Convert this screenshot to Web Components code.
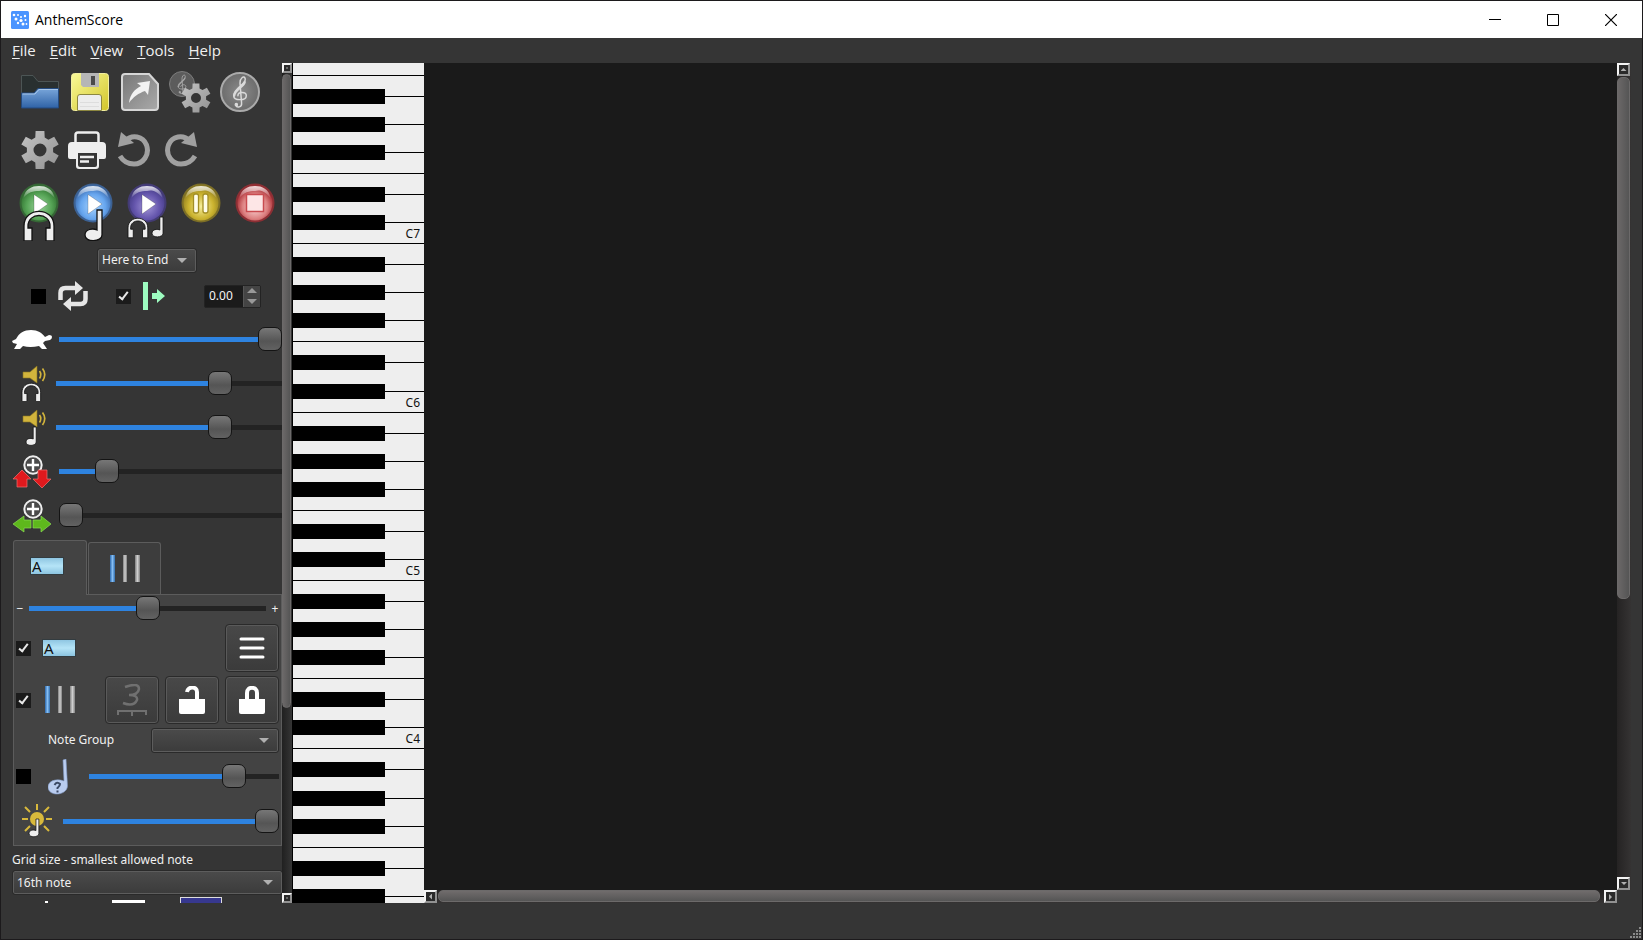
<!DOCTYPE html>
<html lang="en">
<head>
<meta charset="utf-8">
<title>AnthemScore</title>
<style>
  html, body { margin: 0; height: 100%; background: #1c1a1c; }
  body { font: 12px/16px "Noto Sans", "Open Sans", sans-serif; color: #f0f0f0; overflow: hidden; }
</style>
</head>
<body>
<as-window></as-window>
<script>
const define = (name, html, init) => {
  const template = document.createElement('template');
  template.innerHTML = html;
  customElements.define(name, class extends HTMLElement {
    constructor() {
      super();
      this.attachShadow({ mode: 'open' }).append(template.content.cloneNode(true));
    }
    connectedCallback() { if (init) init.call(this, this.shadowRoot); }
  });
};

/* ---------- icons ---------- */
const clef = (x, y, s, c) => `<g transform="translate(${x} ${y}) scale(${s})" fill="none" stroke="${c}" stroke-linecap="round"><path stroke-width="1.400" d="M-4 13C-3 16 2 15 1.500 11L0-8C0-13 4-16 5-12C6-7-6-3-6 4C-6 9 6 9 6 4C6 0-2 0-2 4"/><path stroke-width="2.200" d="M4.500-9C3-4-5-2-5.500 4"/><circle cx="-3.500" cy="12.500" r="1.200" fill="${c}"/></g>`;
const teeth = (cx, cy, R, r, n) => {
  let d = '';
  for (let i = 0; i < n; i++) {
    const a = i * 2 * Math.PI / n - Math.PI / 2;
    [[-.36, r], [-.23, R], [.23, R], [.36, r]].forEach(([o, q], k) => {
      d += (i || k ? 'L' : 'M') + (cx + q * Math.cos(a + o)).toFixed(1) + ' ' + (cy + q * Math.sin(a + o)).toFixed(1);
    });
  }
  return d + 'Z';
};
const gear = (cx, cy, R, hole, n) => `<path fill="url(#m)" fill-rule="evenodd" d="${teeth(cx, cy, R, R * .68, n)}M${cx - hole} ${cy}a${hole} ${hole} 0 1 0 ${2 * hole} 0a${hole} ${hole} 0 1 0 ${-2 * hole} 0Z"/>`;
const metal = `<linearGradient id="m" x1="0" y1="0" x2="1" y2="1"><stop stop-color="#c4c4c4"/><stop offset="1" stop-color="#929292"/></linearGradient>`;
const orb = (hi, mid, rim) => `<defs><radialGradient id="o" cx=".5" cy=".6" r=".55"><stop stop-color="${hi}"/><stop offset=".65" stop-color="${mid}"/><stop offset="1" stop-color="${rim}"/></radialGradient><linearGradient id="g" x2="0" y2="1"><stop stop-color="#fff" stop-opacity=".85"/><stop offset="1" stop-color="#fff" stop-opacity=".05"/></linearGradient></defs><circle cx="20" cy="20" r="19.500" fill="${rim}" opacity=".75"/><circle cx="20" cy="20" r="17.500" fill="url(#o)"/><path fill="url(#g)" d="M4.500 15C6 6 13 3 20 3S34 6 35.500 15C29 7 24 7 20 8C14 8 9 9 4.500 15Z"/>`;
const play = `<path fill="#fff" stroke="#0003" d="M15 11.500L29 21L15 31Z"/>`;
const phones = (x, y, s) => `<g transform="translate(${x} ${y}) scale(${s})"><path fill="#eee" stroke="#111" stroke-width="1.300" d="M0 30V15C0-4.500 30-4.500 30 15V30H22V17H26V15C26 1 4 1 4 15V17H8V30Z"/></g>`;
const note = (x, y, s) => `<g transform="translate(${x} ${y}) scale(${s})"><path fill="#eee" stroke="#111" stroke-width="1.300" d="M12 0H17V25C17 32 0 33 0 25C0 19 8 18 12 20Z"/></g>`;
const speaker = `<path fill="#d2b43c" stroke="#8c7722" stroke-width=".6" d="M2 7H9L16 1V18L9 13H2Z"/><path fill="none" stroke="#d2b43c" stroke-width="1.700" d="M18.500 6Q21 9.500 18.500 13.500M21.500 3.500Q26 9.500 21.500 16"/>`;
const lens = `<circle cx="20" cy="10" r="8.700" fill="#4a4a4a" stroke="#eee" stroke-width="2"/><path stroke="#fff" stroke-width="2.400" d="M14 10H26M20 4V16"/>`;
const bars = `<defs><linearGradient id="b"><stop stop-color="#2d69ad"/><stop offset=".5" stop-color="#85bdf2"/><stop offset="1" stop-color="#326eae"/></linearGradient><linearGradient id="w"><stop stop-color="#808080"/><stop offset=".5" stop-color="#cfcfcf"/><stop offset="1" stop-color="#808080"/></linearGradient></defs><path fill="url(#b)" d="M0 0H5V27H0Z"/><path fill="url(#w)" d="M13 0H17V27H13Z"/><path fill="url(#w)" d="M25 0H30V27H25Z"/>`;
const lockBody = `<path fill="#fff" d="M1 13H27V26Q27 28 25 28H3Q1 28 1 26Z"/>`;

const icons = {
  logo: [18, 18, `<rect width="18" height="18" rx="1.500" fill="#4a94ff"/><g fill="#fff"><circle cx="3" cy="4" r="1.300"/><circle cx="7" cy="4" r="1"/><circle cx="5" cy="8" r="1.500"/><circle cx="10" cy="6" r="1"/><circle cx="10" cy="9.500" r="1.600"/><circle cx="14" cy="5" r="1.200"/><circle cx="14.500" cy="9" r="1"/><circle cx="7" cy="12" r="1.200"/><circle cx="12" cy="13" r="1.500"/><circle cx="15.500" cy="13" r=".9"/></g>`],
  min: [12, 12, `<path stroke="#000" d="M0 5.500H12"/>`],
  max: [12, 12, `<path stroke="#000" fill="none" d="M.5.5H11.500V11.500H.5Z"/>`],
  close: [12, 12, `<path stroke="#000" stroke-width="1.200" d="M0 0L12 12M12 0L0 12"/>`],
  folder: [38, 34, `<defs><linearGradient id="a" x2="0" y2="1"><stop stop-color="#79a6da"/><stop offset="1" stop-color="#2f62a6"/></linearGradient></defs><path fill="#293030" stroke="#4c5555" d="M.5 32V.5H12L17 6.500H37.500V32Z"/><path fill="url(#a)" stroke="#244b80" d="M.5 33V18H13L17 13.500H37.500V33Z"/><path stroke="#a5c5e8" fill="none" d="M1.500 19H14L18 14.500H37"/>`],
  save: [38, 38, `<defs><linearGradient id="a" x2="1" y2="1"><stop stop-color="#fafa98"/><stop offset="1" stop-color="#d2c52b"/></linearGradient></defs><rect x=".5" y=".5" width="37" height="37" rx="3" fill="url(#a)" stroke="#f2efa0"/><path fill="#b6b6b6" d="M10 0H28V14H12L10 12Z"/><path fill="#4a4a4a" d="M20 3H24V12H20Z"/><path fill="#ededed" stroke="#8c8740" d="M6.500 37.500V24Q6.500 21.500 9 21.500H28Q30.500 21.500 30.500 24V37.500Z"/><path stroke="#ddd" d="M9 29.500H28M9 33.500H28"/>`],
  export: [38, 38, `<defs><linearGradient id="a" x2="1" y2="1"><stop stop-color="#777"/><stop offset="1" stop-color="#aaa"/></linearGradient></defs><path fill="url(#a)" stroke="#d6d6d6" stroke-width="2" d="M4 1H28L37 11V34Q37 37 34 37H4Q1 37 1 34V4Q1 1 4 1Z"/><path fill="#f2f2f2" d="M8 30C9 21 14 16 20 13L16 10L29 8L27 22L24 18C18 20 12 24 8 30Z"/>`],
  clefgear: [42, 42, `<defs>${metal}</defs><circle cx="13" cy="13" r="12.500" fill="#5c5c5c" stroke="#7d7d7d"/>${clef(13, 13, .65, '#a5a5a5')}${gear(27, 27, 15, 5, 6)}`],
  clef: [42, 42, `<defs><radialGradient id="a"><stop stop-color="#8b8b8b"/><stop offset="1" stop-color="#6c6c6c"/></radialGradient></defs><circle cx="21" cy="21" r="19" fill="url(#a)" stroke="#aaa" stroke-width="2"/>${clef(21, 20.5, 1.05, '#dadada')}`],
  gear: [40, 40, `<defs>${metal}</defs>${gear(20, 20, 19.5, 6.5, 6)}`],
  print: [38, 38, `<path fill="none" stroke="#eee" stroke-width="2.500" d="M7.500 13V4Q7.500 1.500 10 1.500H28Q30.500 1.500 30.500 4V13"/><path fill="#eee" d="M4 11H34Q38 11 38 15V26Q38 28 36 28H31V35Q31 38 28 38H11Q8 38 8 35V28H2Q0 28 0 26V15Q0 11 4 11Z"/><path fill="#353535" d="M10 22H29V34Q29 36 27 36H12Q10 36 10 34Z"/><path stroke="#eee" stroke-width="2.500" d="M12 26H26M12 30.500H21"/>`],
  undo: [34, 36, `<path fill="none" stroke="#a0a0a0" stroke-width="5" d="M8 9C15 2 26 4 29.500 13C33 23 26 32 17 32C11 32 6 29 3 24"/><path fill="#a0a0a0" d="M4 0L17 11L1 15Z"/>`],
  redo: [34, 36, `<path fill="none" stroke="#a0a0a0" stroke-width="5" d="M26 9C19 2 8 4 4.500 13C1 23 8 32 17 32C23 32 28 29 31 24"/><path fill="#a0a0a0" d="M30 0L17 11L33 15Z"/>`],
  playaudio: [40, 58, orb('#9bd59b', '#56a456', '#357835') + play + phones(5, 28, 1)],
  playnotes: [40, 58, orb('#a8d4ff', '#66a5ee', '#3f70b3') + play + note(12, 27, 1)],
  playboth: [40, 58, orb('#a396d8', '#6556ad', '#483e8a') + play + phones(1, 35, .66) + note(25, 34, .65)],
  pause: [40, 58, orb('#f7ee9c', '#cbb32f', '#968321') + `<path fill="#fffdea" stroke="#a28e25" stroke-width="1.300" d="M12.500 13Q12.500 11 14.500 11H15.500Q17.500 11 17.500 13V28Q17.500 30 15.500 30H14.500Q12.500 30 12.500 28ZM22 13Q22 11 24 11H25Q27 11 27 13V28Q27 30 25 30H24Q22 30 22 28Z"/>`],
  stop: [40, 58, orb('#ffe0e0', '#dc8080', '#a92d34') + `<path fill="#fde6e6" stroke="#c94b50" stroke-width="1.500" d="M11.500 11.500H28.500V28.500H11.500Z"/>`],
  loop: [30, 30, `<path fill="none" stroke="#e6e6e6" stroke-width="4.500" d="M2.500 19V12Q2.500 7 7.500 7H18M27.500 10V18Q27.500 23 22.500 23H11"/><path fill="#e6e6e6" d="M17 0L25 7L17 14ZM13 16L5 23L13 30Z"/>`],
  start: [22, 28, `<path fill="#9dfcc0" d="M0 0H5V28H0ZM9 11H14V7L22 14L14 21V17H9Z"/>`],
  turtle: [40, 20, `<path fill="#fff" d="M0 12L4 10C7 4 12 1 19 1C26 1 30 4 33 8L37 6Q40 6 40 8Q40 10 38 11L33 12L31 14L35 20H30L27 17Q18 19 11 17L8 20H2L5 15L1 14Z"/>`],
  volaudio: [26, 36, speaker + phones(1, 18, .62)],
  volnotes: [26, 36, speaker + note(5, 18, .6)],
  zoomv: [40, 36, `<g transform="translate(1 2)">${lens}<path fill="#e0191d" stroke="#ef7070" stroke-width=".7" d="M9 15L18 24H14V32H4V24H0ZM25 15H34V24H38L29 33L20 24H25Z"/></g>`],
  zoomh: [40, 36, `<g transform="translate(1 2)">${lens}<path fill="#5eb81c" stroke="#8bdb55" stroke-width=".7" d="M0 25L11 17V21H18V29H11V33ZM38 25L28 17V21H20V29H28V33Z"/></g>`],
  bars: [30, 28, bars],
  menu: [26, 24, `<path stroke="#fff" stroke-width="3" stroke-linecap="round" d="M2 3H24M2 12H24M2 21H24"/>`],
  triplet: [32, 32, `<g fill="none" stroke="#707070"><path stroke-width="2.500" d="M9 3Q23-2 23 5Q22 11 13 11Q22 11 21 16Q18 23 7 19"/><path stroke-width="2" d="M2 31V27H30V31M16 27V32"/></g>`],
  unlock: [28, 28, lockBody + `<path fill="none" stroke="#fff" stroke-width="4" d="M9 6C10 0 19 0 19 6V14"/>`],
  lock: [28, 28, lockBody + `<path fill="none" stroke="#fff" stroke-width="4" d="M9 14V7C9 0 19 0 19 7V14"/>`],
  guess: [20, 36, `<path fill="#bacdf0" stroke="#8298c4" stroke-width=".6" d="M15 1L18 0L19.500 27C19 37 0 38 0 28C0 22 8 19 16 22Z"/><path fill="none" stroke="#3c4a66" stroke-width="2" d="M6.500 26Q9 22 12 25Q12 27 9.500 29V30M9.500 31.500V33.500"/>`],
  sun: [32, 34, `<circle cx="15" cy="15" r="7" fill="#d8b93c"/><path stroke="#d8b93c" stroke-width="2" d="M15 0V6M0 15H6M24 15H30M3 3L8 8M27 3L22 8M3 27L8 22M27 27L22 22"/>` + note(7, 15, .58)],
};

define('as-icon', `<style>:host{display:block;flex:none}span,svg{display:block}</style><span></span>`, function (root) {
  const [w, h, body] = icons[this.getAttribute('name')];
  root.querySelector('span').innerHTML = `<svg width="${w}" height="${h}" viewBox="0 0 ${w} ${h}" aria-hidden="true">${body}</svg>`;
});

/* ---------- controls ---------- */
define('as-tool', `<style>
  :host { display: block; flex: none; }
  button { display: flex; align-items: center; justify-content: center; box-sizing: border-box; width: 100%; height: 100%; padding: 0; border: 0; background: none; color: inherit; font: inherit; }
  :host([framed]) { width: 52px; height: 46px; }
  :host([framed]) button { border: 1px solid #5a5a5a; border-radius: 3px; outline: 1px solid #2a2a2a; background: linear-gradient(#484848, #3b3b3b); }
  :host([tab]) button { border: 1px solid #5c5c5c; border-bottom: 0; border-radius: 3px 3px 0 0; background: #3d3d3d; }
  :host([tab][selected]) button { padding: 0 6px 4px 0; background: #434343; }
</style><button type="button"><slot></slot></button>`, function (root) {
  root.querySelector('button').setAttribute('aria-label', this.getAttribute('label'));
});

define('as-slider', `<style>
  :host { display: flex; flex: 1; min-width: 0; }
  input { appearance: none; -webkit-appearance: none; width: 100%; height: 24px; margin: 0; background: none; }
  input::-webkit-slider-runnable-track { height: 5px; background: linear-gradient(90deg, #2e83e0 calc(12px + (100% - 24px) * var(--level)), #232323 0); }
  input::-webkit-slider-thumb { -webkit-appearance: none; box-sizing: border-box; width: 24px; height: 24px; margin-top: -10px; border: 1px solid #141414; border-radius: 7px; background: linear-gradient(#777, #555 60%, #626262); }
</style><input type="range" min="0" max="100">`, function (root) {
  const input = root.querySelector('input');
  input.value = this.getAttribute('value');
  input.setAttribute('aria-label', this.getAttribute('label'));
  const paint = () => input.style.setProperty('--level', input.value / 100);
  input.oninput = paint;
  paint();
});

define('as-check', `<style>
  :host { display: block; flex: none; }
  label { display: flex; align-items: center; gap: var(--check-gap, 12px); }
  input { appearance: none; -webkit-appearance: none; display: grid; width: 15px; height: 15px; margin: 0; background: #000; }
  input:checked { background: #1b1b1b; }
  input:checked::after { content: ""; width: 5px; height: 10px; margin: 1px 5px; border: solid #e8e8e8; border-width: 0 2px 2px 0; transform: rotate(38deg); box-sizing: border-box; }
</style><label><input type="checkbox"><slot></slot></label>`, function (root) {
  const input = root.querySelector('input');
  input.checked = this.hasAttribute('checked');
  input.setAttribute('aria-label', this.getAttribute('label'));
});

define('as-select', `<style>
  :host { display: block; flex: none; position: relative; }
  select { appearance: none; -webkit-appearance: none; display: block; box-sizing: border-box; width: 100%; height: 23px; padding: 0 20px 0 3px; border: 1px solid #5d5d5d; border-radius: 2px; outline: 1px solid #2a2a2a; background: linear-gradient(#4a4a4a, #3c3c3c); color: #f0f0f0; font: inherit; }
  i { position: absolute; right: 9px; top: 9px; border: 5px solid transparent; border-top-color: #b0b0b0; border-bottom: 0; pointer-events: none; }
</style><select><option></option></select><i></i>`, function (root) {
  root.querySelector('option').textContent = this.getAttribute('value') || '';
  root.querySelector('select').setAttribute('aria-label', this.getAttribute('label'));
});

define('as-spin', `<style>
  :host { display: flex; flex: none; width: 57px; height: 23px; box-sizing: border-box; border: 1px solid #232323; border-radius: 2px; background: #1b1b1b; }
  input { flex: 1; min-width: 0; padding: 0 0 0 4px; border: 0; background: none; color: #f4f4f4; font: inherit; }
  div { display: flex; flex-direction: column; width: 16px; border-left: 1px solid #555; background: #444; }
  button { flex: 1; display: grid; place-items: center; padding: 0; border: 0; background: none; }
  i { border: 5px solid transparent; border-bottom-color: #999; border-top: 0; }
  button + button i { border-top: 5px solid #999; border-bottom: 0; }
</style><input type="text" value="0.00" aria-label="Start offset"><div><button type="button" aria-label="Increase"><i></i></button><button type="button" aria-label="Decrease"><i></i></button></div>`);

define('as-tag', `<style>
  :host { display: block; flex: none; box-sizing: border-box; width: 34px; height: 18px; padding-left: 1px; border: 1px solid #333c40; background: linear-gradient(#8fc6e2, #b5e4f7 50%, #8cc4e0); color: #111; font: 15px/16px "Noto Sans", sans-serif; text-align: left; }
</style><slot></slot>`);

define('as-scroll', `<style>
  :host { display: flex; flex-direction: column; --size: 13px; background: linear-gradient(90deg, #252323, #353333); }
  :host([horizontal]) { flex-direction: row; background: linear-gradient(#252323, #353333); }
  :host([small]) { --size: 10px; background: linear-gradient(90deg, #202020, #353535); }
  button { flex: none; display: grid; place-items: center; width: var(--size); height: var(--size); padding: 0; border: 2px solid; border-color: #f4f4f4 #929292 #929292 #f4f4f4; background: #2a2a2a; }
  i { width: 6px; height: 3px; background: #b0b0b0; clip-path: polygon(50% 0, 100% 100%, 0 100%); }
  button:last-child i { transform: rotate(180deg); }
  :host([horizontal]) i { width: 3px; height: 6px; clip-path: polygon(0 50%, 100% 0, 100% 100%); }
  :host([small]) i { width: 2px; height: 2px; clip-path: none; background: #666; }
  .thumb { flex: var(--thumb) 0 0; margin: 1px 1px 0 0; border: 1px solid #6c6a6a; box-sizing: border-box; border-radius: 5px; background: linear-gradient(90deg, #6b6868, #555); }
  :host([horizontal]) .thumb { margin: 0 0 1px 1px; background: linear-gradient(#706c6c, #555); }
  .rest { flex: var(--rest) 0 0; }
</style><button type="button" aria-label="Scroll back"><i></i></button><div class="thumb"></div><div class="rest"></div><button type="button" aria-label="Scroll forward"><i></i></button>`);

/* ---------- piano ---------- */
define('as-key', `<style>
  :host { display: block; flex: none; position: relative; box-sizing: border-box; border-bottom: 1px solid #000; background: #eee; color: #111; text-align: right; }
  :host([sharp])::after { content: ""; position: absolute; z-index: 1; left: 0; bottom: -8px; width: 92px; height: 15px; background: #000; }
  slot { display: block; padding: 3px 4px 0 0; }
</style><slot></slot>`);

define('as-piano', `<style>
  :host { display: flex; flex-direction: column; overflow: hidden; background: #eee; }
</style>`, function (root) {
  const add = (height, sharp, text) => {
    const key = document.createElement('as-key');
    key.style.height = height + 'px';
    key.toggleAttribute('sharp', sharp);
    key.textContent = text;
    root.append(key);
  };
  const sharps = [true, true, true, false, true, true, false];
  const octaves = [
    ['C7', 21, 28, 28, 21, 21, 28, 21],
    ['C6', 21, 28, 28, 21, 21, 29, 21],
    ['C5', 21, 28, 28, 21, 21, 28, 21],
    ['C4', 21, 28, 28, 21, 21, 28, 21],
    ['C3', 21, 29, 28, 21, 21, 28, 21],
  ];
  add(13, false, '');
  for (const [name, ...heights] of octaves)
    heights.forEach((h, i) => { if (!(name === 'C3' && i === 6)) add(h, sharps[i], i === 6 ? name : ''); });
});

/* ---------- window chrome ---------- */
define('as-title', `<style>
  :host { display: flex; align-items: center; height: 37px; padding: 0 2px 0 10px; background: #fff; color: #000; font: 14px/20px "Open Sans", "Noto Sans", sans-serif; }
  h1 { flex: 1; margin: 0 0 0 6px; font: inherit; }
  as-tool { width: 58px; height: 36px; }
</style><as-icon name="logo"></as-icon><h1>AnthemScore</h1>
<as-tool label="Minimize"><as-icon name="min"></as-icon></as-tool><as-tool label="Maximize"><as-icon name="max"></as-icon></as-tool><as-tool label="Close"><as-icon name="close"></as-icon></as-tool>`);

define('as-menu', `<style>
  :host { display: flex; align-items: flex-start; gap: 14px; height: 25px; padding-left: 11px; }
  button { padding: 0; margin-top: 2px; border: 0; background: none; color: #f0f0f0; font: 15px/20px "Open Sans", "Noto Sans", sans-serif; }
  u { text-underline-offset: 2px; }
</style><button type="button"><u>F</u>ile</button><button type="button"><u>E</u>dit</button><button type="button"><u>V</u>iew</button><button type="button"><u>T</u>ools</button><button type="button"><u>H</u>elp</button>`);

/* ---------- left panel ---------- */
define('as-row', `<style>
  :host { display: flex; flex: none; align-items: center; height: 44px; box-sizing: border-box; }
</style><slot></slot>`);

define('as-panel', `<style>
  :host { display: flex; flex-direction: column; overflow: hidden; }
  .bar { height: 58px; }
  .files { padding-left: 14px; } .files as-tool { width: 50px; height: 50px; }
  .edit { padding-left: 15px; } .edit as-tool { width: 47px; height: 50px; }
  .play { height: 66px; padding-left: 11px; } .play as-tool { width: 54px; height: 60px; }
  .range { height: 30px; padding-left: 97px; } .range as-select { width: 98px; }
  .options { height: 42px; padding: 0 21px 0 30px; gap: 28px; }
  .options as-spin { margin-left: auto; }
  .level { padding-left: 11px; gap: 7px; }
  .level.volume { padding-left: 20px; gap: 9px; }
  .tabs { display: flex; flex: none; align-items: flex-end; gap: 1px; height: 54px; margin-top: 3px; padding-left: 12px; position: relative; z-index: 1; }
  .tabs as-tool { width: 73px; height: 52px; }
  .tabs as-tool[selected] { width: 74px; height: 55px; margin-bottom: -1px; }
  section { flex: none; margin-left: 12px; padding-bottom: 2px; border: 1px solid #5c5c5c; background: #434343; }
  section as-row { padding: 0 2px; }
  section as-tool:last-child { margin-right: 1px; }
  .blend { height: 27px; gap: 5px; }
  .blend span { width: 8px; text-align: center; }
  .show { height: 52px; --check-gap: 11px; }
  .show as-check, .lines as-check { flex: 1; }
  .lines { height: 52px; gap: 8px; --check-gap: 14px; }
  section .group { height: 28px; padding: 0 3px 0 34px; justify-content: space-between; }
  .group as-select { width: 126px; }
  .guess { gap: 21px; height: 45px; --check-gap: 17px; }
  section .bright { padding-left: 8px; gap: 9px; height: 44px; }
  .grid { flex: none; padding: 6px 0 0 11px; }
  .grid label { display: block; height: 19px; }
  .grid as-select { margin-left: 1px; }
  .more { display: flex; flex: none; align-items: flex-start; gap: 35px; padding: 3px 0 0 44px; }
  .more b { display: block; width: 33px; height: 3px; margin: 3px 0 0 0; background: #fff; }
  .more b:first-child { width: 3px; height: 2px; margin: 4px 29px 0 0; }
  .more b:last-child { width: 40px; height: 12px; margin: 0; background: #37388f; border: 1px solid #ddd; }
</style>
<as-row class="bar files"><as-tool label="Open"><as-icon name="folder"></as-icon></as-tool><as-tool label="Save"><as-icon name="save"></as-icon></as-tool><as-tool label="Export"><as-icon name="export"></as-icon></as-tool><as-tool label="Transcription settings"><as-icon name="clefgear"></as-icon></as-tool><as-tool label="View score"><as-icon name="clef"></as-icon></as-tool></as-row>
<as-row class="bar edit"><as-tool label="Settings"><as-icon name="gear"></as-icon></as-tool><as-tool label="Print"><as-icon name="print"></as-icon></as-tool><as-tool label="Undo"><as-icon name="undo"></as-icon></as-tool><as-tool label="Redo"><as-icon name="redo"></as-icon></as-tool></as-row>
<as-row class="play"><as-tool label="Play audio"><as-icon name="playaudio"></as-icon></as-tool><as-tool label="Play notes"><as-icon name="playnotes"></as-icon></as-tool><as-tool label="Play both"><as-icon name="playboth"></as-icon></as-tool><as-tool label="Pause"><as-icon name="pause"></as-icon></as-tool><as-tool label="Stop"><as-icon name="stop"></as-icon></as-tool></as-row>
<as-row class="range"><as-select value="Here to End" label="Playback range"></as-select></as-row>
<as-row class="options"><as-check label="Loop"><as-icon name="loop"></as-icon></as-check><as-check checked label="Follow playback"><as-icon name="start"></as-icon></as-check><as-spin></as-spin></as-row>
<as-row class="level"><as-icon name="turtle"></as-icon><as-slider value="100" label="Speed"></as-slider></as-row>
<as-row class="level volume"><as-icon name="volaudio"></as-icon><as-slider value="75" label="Audio volume"></as-slider></as-row>
<as-row class="level volume"><as-icon name="volnotes"></as-icon><as-slider value="75" label="Note volume"></as-slider></as-row>
<as-row class="level"><as-icon name="zoomv"></as-icon><as-slider value="18" label="Vertical zoom"></as-slider></as-row>
<as-row class="level"><as-icon name="zoomh"></as-icon><as-slider value="0" label="Horizontal zoom"></as-slider></as-row>
<div class="tabs"><as-tool tab selected label="Notes"><as-tag>A</as-tag></as-tool><as-tool tab label="Grid lines"><as-icon name="bars"></as-icon></as-tool></div>
<section>
  <as-row class="blend"><span>−</span><as-slider value="50" label="Note threshold"></as-slider><span>+</span></as-row>
  <as-row class="show"><as-check checked label="Show notes"><as-tag>A</as-tag></as-check><as-tool framed label="Note menu"><as-icon name="menu"></as-icon></as-tool></as-row>
  <as-row class="lines"><as-check checked label="Show grid"><as-icon name="bars"></as-icon></as-check><as-tool framed label="Triplet"><as-icon name="triplet"></as-icon></as-tool><as-tool framed label="Unlock"><as-icon name="unlock"></as-icon></as-tool><as-tool framed label="Lock"><as-icon name="lock"></as-icon></as-tool></as-row>
  <as-row class="group"><span>Note Group</span><as-select label="Note Group"></as-select></as-row>
  <as-row class="guess"><as-check label="Show uncertain notes"><as-icon name="guess"></as-icon></as-check><as-slider value="80" label="Certainty"></as-slider></as-row>
  <as-row class="bright"><as-icon name="sun"></as-icon><as-slider value="100" label="Brightness"></as-slider></as-row>
</section>
<div class="grid"><label>Grid size - smallest allowed note</label><as-select value="16th note" label="Grid size - smallest allowed note"></as-select></div>
<div class="more"><b></b><b></b><b></b></div>`);

define('as-window', `<style>
  :host { display: grid; box-sizing: border-box; height: 100vh; border: 1px solid #1c1a1c; grid-template-rows: auto auto minmax(0, 1fr) 36px; background: #353535; }
  main { display: grid; min-height: 0; grid-template-columns: 281px 10px 132px minmax(0, 1fr) 14px; grid-template-rows: minmax(0, 1fr) 13px; padding-right: 11px; }
  as-panel, .side, as-piano { grid-row: 1 / 3; min-height: 0; }
  as-panel { grid-column: 1; }
  as-piano { border-left: 1px solid #000; }
  .side { --thumb: 634; --rest: 186; }
  .view { background: #1a1a1a; }
  .down { --thumb: 521; --rest: 278; }
  .across { grid-column: 4; --thumb: 1162; --rest: 4; }
  footer { display: flex; align-items: flex-end; justify-content: flex-end; }
</style>
<as-title></as-title><as-menu></as-menu>
<main>
  <as-panel></as-panel><as-scroll small class="side"></as-scroll><as-piano></as-piano>
  <div class="view"></div><as-scroll class="down"></as-scroll><as-scroll horizontal class="across"></as-scroll>
</main>
<footer><svg width="12" height="12" viewBox="0 0 12 12" fill="#8a8a8a" aria-hidden="true"><path d="M9 0h2v2h-2zM6 3h2v2H6zM9 3h2v2H9zM3 6h2v2H3zM6 6h2v2H6zM9 6h2v2H9zM0 9h2v2H0zM3 9h2v2H3zM6 9h2v2H6zM9 9h2v2H9z"/></svg></footer>`);
</script>
</body>
</html>
